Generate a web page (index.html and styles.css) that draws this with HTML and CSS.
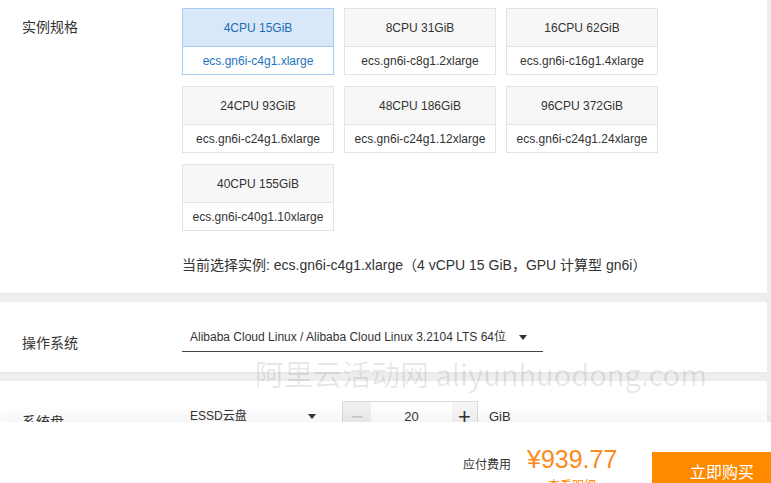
FILE: index.html
```html
<!DOCTYPE html>
<html lang="zh-CN">
<head>
<meta charset="utf-8">
<title>ECS 配置</title>
<link rel="stylesheet" href="styles.css">
</head>
<body>
<div class="page">
  <section class="panel panel-spec">
    <div class="label">实例规格</div>
    <div class="spec-body">
      <div class="cards">
        <div class="card selected"><div class="card-head">4CPU 15GiB</div><div class="card-body">ecs.gn6i-c4g1.xlarge</div></div>
        <div class="card"><div class="card-head">8CPU 31GiB</div><div class="card-body">ecs.gn6i-c8g1.2xlarge</div></div>
        <div class="card"><div class="card-head">16CPU 62GiB</div><div class="card-body">ecs.gn6i-c16g1.4xlarge</div></div>
        <div class="card"><div class="card-head">24CPU 93GiB</div><div class="card-body">ecs.gn6i-c24g1.6xlarge</div></div>
        <div class="card"><div class="card-head">48CPU 186GiB</div><div class="card-body">ecs.gn6i-c24g1.12xlarge</div></div>
        <div class="card"><div class="card-head">96CPU 372GiB</div><div class="card-body">ecs.gn6i-c24g1.24xlarge</div></div>
        <div class="card"><div class="card-head">40CPU 155GiB</div><div class="card-body">ecs.gn6i-c40g1.10xlarge</div></div>
      </div>
      <div class="current">当前选择实例: ecs.gn6i-c4g1.xlarge（4 vCPU 15 GiB，GPU 计算型 gn6i）</div>
    </div>
  </section>

  <section class="panel panel-os">
    <div class="label">操作系统</div>
    <div class="select os-select">
      <span class="select-text">Alibaba Cloud Linux / Alibaba Cloud Linux 3.2104 LTS 64位</span>
      <span class="caret"></span>
    </div>
  </section>

  <section class="panel panel-disk">
    <div class="label">系统盘</div>
    <div class="select disk-select">
      <span class="select-text">ESSD云盘</span>
      <span class="caret"></span>
    </div>
    <div class="stepper">
      <span class="step-btn minus">−</span>
      <span class="step-value">20</span>
      <span class="step-btn plus">+</span>
    </div>
    <span class="unit">GiB</span>
  </section>

  <div class="watermark">阿里云活动网 aliyunhuodong.com</div>

  <footer class="footer">
    <div class="fee-label">应付费用</div>
    <div class="price-block">
      <div class="price">¥939.77</div>
      <div class="detail">查看明细</div>
    </div>
    <div class="buy-btn">立即购买</div>
  </footer>
</div>
</body>
</html>
```

FILE: styles.css
```css
html, body {
  margin: 0;
  padding: 0;
}
body {
  background: #eeeeee;
  font-family: "Liberation Sans", Arial, "Noto Sans CJK SC", sans-serif;
  color: #333;
}
.page {
  position: relative;
  width: 771px;
  height: 483px;
  overflow: hidden;
  background: #eeeeee;
}
.panel {
  width: 767px;
  background: #fff;
  display: flex;
  align-items: flex-start;
  margin-bottom: 9px;
  box-shadow: 0 1px 3px rgba(0, 0, 0, 0.04);
}
.label {
  width: 182px;
  flex: none;
  box-sizing: border-box;
  padding-left: 22px;
  font-size: 14px;
  line-height: 20px;
  color: #333;
  font-family: "Noto Sans CJK SC", sans-serif;
}
.panel-spec {
  padding: 8px 0 18px 0;
}
.panel-spec .label {
  margin-top: 8px;
}
.cards {
  display: grid;
  grid-template-columns: repeat(3, 152px);
  column-gap: 10px;
  row-gap: 11px;
}
.card {
  border: 1px solid #e3e3e3;
  font-size: 12px;
  text-align: center;
  color: #333;
}
.card-head {
  height: 37px;
  line-height: 39px;
  background: #f7f7f7;
  border-bottom: 1px solid #e3e3e3;
}
.card-body {
  height: 27px;
  line-height: 28px;
  background: #fff;
}
.card.selected {
  border-color: #a9cbef;
}
.card.selected .card-head {
  background: #d9e8f9;
  border-bottom-color: #a9cbef;
  color: #1d6cb5;
}
.card.selected .card-body {
  color: #1e73c0;
}
.current {
  margin-top: 24px;
  font-size: 14px;
  line-height: 20px;
  color: #333;
  white-space: nowrap;
}
.panel-os {
  height: 70px;
}
.panel-os .label,
.panel-disk .label {
  margin-top: 30px;
}
.select {
  margin-top: 26px;
  box-sizing: border-box;
  display: flex;
  align-items: center;
  justify-content: space-between;
  font-size: 12px;
  line-height: 18px;
  padding: 0 16px 5px 8px;
  color: #333;
  flex: none;
}
.os-select {
  width: 361px;
  border-bottom: 1px solid #444;
}
.disk-select {
  width: 150px;
}
.caret {
  width: 0;
  height: 0;
  border-left: 4px solid transparent;
  border-right: 4px solid transparent;
  border-top: 5px solid #333;
}
.panel-disk {
  height: 80px;
  margin-bottom: 0;
}
.stepper {
  margin-top: 20px;
  margin-left: 10px;
  display: flex;
  height: 32px;
  border: 1px solid #dcdcdc;
  box-sizing: border-box;
  font-size: 12px;
  flex: none;
}
.step-btn {
  display: flex;
  align-items: center;
  justify-content: center;
  color: #333;
  font-size: 22px;
  font-weight: 300;
  background: #f0f0f0;
}
.minus {
  width: 28px;
  color: #c9c9c9;
  background: #efefef;
}
.plus {
  width: 25px;
  background: #f5f5f5;
}
.step-value {
  width: 81px;
  line-height: 30px;
  text-align: center;
  background: #fff;
  font-size: 13px;
}
.unit {
  margin-top: 27px;
  margin-left: 11px;
  font-size: 13px;
  line-height: 18px;
}
.watermark {
  position: absolute;
  left: 255px;
  top: 355px;
  font-family: "Noto Sans CJK SC", sans-serif;
  font-size: 29px;
  line-height: 36px;
  color: rgba(0, 0, 0, 0.09);
  white-space: nowrap;
  pointer-events: none;
}
.footer {
  position: absolute;
  left: 0;
  right: 0;
  top: 422px;
  bottom: 0;
  background: #fff;
  box-shadow: 0 -4px 18px rgba(0, 0, 0, 0.06);
  display: flex;
  align-items: flex-start;
  padding-left: 463px;
  overflow: hidden;
}
.fee-label {
  margin-top: 33px;
  font-family: "Noto Sans CJK SC", sans-serif;
  font-size: 12px;
  line-height: 18px;
  color: #333;
  width: 64px;
  flex: none;
}
.price-block {
  width: 125px;
  margin-top: 22px;
  flex: none;
}
.price {
  font-size: 25px;
  line-height: 30px;
  color: #fb8a1c;
  white-space: nowrap;
}
.detail {
  margin-left: 21px;
  margin-top: 3px;
  font-family: "Noto Sans CJK SC", sans-serif;
  font-size: 12px;
  line-height: 16px;
  color: #ff8a00;
}
.buy-btn {
  margin-top: 30px;
  width: 140px;
  height: 40px;
  line-height: 38px;
  background: #ff8a00;
  color: #fff;
  text-align: center;
  font-family: "Noto Sans CJK SC", sans-serif;
  font-size: 16px;
  flex: none;
}
```
